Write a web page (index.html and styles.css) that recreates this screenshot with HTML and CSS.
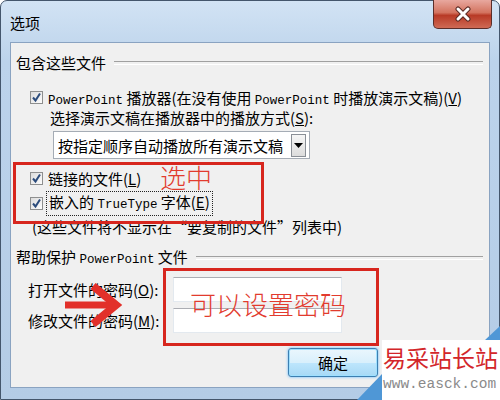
FILE: index.html
```html
<!DOCTYPE html>
<html lang="zh-CN">
<head>
  <meta charset="UTF-8">
  <title>选项</title>
  <link rel="stylesheet" href="styles.css">
</head>
<body>
  <div class="window">
    <div class="titlebar">
      <span class="title">选项</span>
      <button class="close" aria-label="关闭">
        <svg width="20" height="16" viewBox="0 0 20 16">
          <path d="M5 3 L15 13 M15 3 L5 13" stroke="#5a2a24" stroke-width="5" stroke-linecap="round"/>
          <path d="M5 3 L15 13 M15 3 L5 13" stroke="#fff" stroke-width="3" stroke-linecap="round"/>
        </svg>
      </button>
    </div>

    <div class="client">
      <div class="group-head"><span>包含这些文件</span></div>

      <div class="check-row row-player">
        <span class="box"><svg width="11" height="11" viewBox="0 0 11 11"><path d="M2 5.5 L4.5 8.5 L9 1.5" fill="none" stroke="#2c4c7c" stroke-width="2"/></svg></span>
        <span><span class="lat">PowerPoint</span> 播放器(在没有使用 <span class="lat">PowerPoint</span> 时播放演示文稿)(<u>V</u>)</span>
      </div>
      <div class="hint">选择演示文稿在播放器中的播放方式(<u>S</u>):</div>
      <div class="select">
        <span>按指定顺序自动播放所有演示文稿</span>
        <span class="drop"><svg width="9" height="5" viewBox="0 0 9 5"><path d="M0 0 H9 L4.5 5 Z" fill="#000"/></svg></span>
      </div>

      <div class="check-row row-linked">
        <span class="box"><svg width="11" height="11" viewBox="0 0 11 11"><path d="M2 5.5 L4.5 8.5 L9 1.5" fill="none" stroke="#2c4c7c" stroke-width="2"/></svg></span>
        <span>链接的文件(<u>L</u>)</span>
      </div>
      <div class="check-row row-embed">
        <span class="box"><svg width="11" height="11" viewBox="0 0 11 11"><path d="M2 5.5 L4.5 8.5 L9 1.5" fill="none" stroke="#2c4c7c" stroke-width="2"/></svg></span>
        <span class="focus">嵌入的 <span class="lat">TrueType</span> 字体(<u>E</u>)</span>
      </div>
      <div class="note">(这些文件将不显示在“要复制的文件”列表中)</div>

      <div class="group-head head-protect"><span>帮助保护 <span class="lat">PowerPoint</span> 文件</span></div>

      <div class="pw-row">
        <label class="pw-label">打开文件的密码(<u>O</u>):</label>
        <span class="input"></span>
      </div>
      <div class="pw-row pw-second">
        <label class="pw-label">修改文件的密码(<u>M</u>):</label>
        <span class="input"></span>
      </div>

      <button class="ok">确定</button>
    </div>
  </div>

  <!-- 标注 -->
  <div class="mark mark-box mark-files"></div>
  <div class="mark mark-text mark-chosen">选中</div>
  <div class="mark mark-box mark-pw"></div>
  <div class="mark mark-text mark-setpw">可以设置密码</div>
  <svg class="mark arrow" width="64" height="48" viewBox="0 0 64 48">
    <path d="M5 25 H52" stroke="#e2302a" stroke-width="7"/>
    <path d="M33 6 L56 25 L33 44" fill="none" stroke="#e2302a" stroke-width="8"/>
  </svg>

  <div class="mark watermark">
    <svg class="wm-bg" width="145" height="74" viewBox="0 0 145 74">
      <polygon points="27,14 130,14 145,2 145,74 27,74" fill="#fff"/>
      <polygon points="130,14 145,0 145,14" fill="#4f97d6"/>
      <polygon points="2,74 27,48 27,74" fill="#4f97d6"/>
    </svg>
    <div class="wm-name">易采站长站</div>
    <div class="wm-url">www.easck.com</div>
  </div>
</body>
</html>
```

FILE: styles.css
```css
* {
  margin: 0;
  padding: 0;
  box-sizing: border-box;
}

body {
  position: relative;
  width: 500px;
  height: 400px;
  overflow: hidden;
  font-family: "Noto Sans CJK SC", sans-serif;
  font-size: 15px;
  color: #000;
  background: #fff;
}

u {
  text-decoration: underline;
}

.lat {
  font-family: "Liberation Mono", monospace;
  font-size: 12.5px;
}

/* ウィンドウ枠 */
.window {
  width: 500px;
  height: 400px;
  display: flex;
  flex-direction: column;
  padding: 0 9px 11px 9px;
  background: linear-gradient(#d2e3f4, #bcd3eb 60px, #b4cce6);
  border: 1px solid #44566c;
  border-radius: 7px 7px 0 0;
}

.titlebar {
  height: 41px;
  display: flex;
  justify-content: space-between;
  align-items: flex-start;
}

.title {
  padding-top: 12px;
  line-height: 20px;
  font-size: 15px;
}

.close {
  width: 59px;
  height: 29px;
  margin: -1px -2px 0 0;
  display: flex;
  justify-content: center;
  align-items: center;
  border: 1px solid #5b2e2a;
  border-top: none;
  border-radius: 0 0 5px 5px;
  background: linear-gradient(#e8a89f, #d3735f 45%, #b83a26 55%, #cf6a55);
  cursor: pointer;
}

.client {
  flex: 1;
  display: flex;
  flex-direction: column;
  padding-right: 6px;
  background: #f0f0f0;
  border: 1px solid #8aa3c1;
}

.group-head {
  display: flex;
  align-items: center;
  height: 18px;
  margin-top: 11px;
  padding-left: 5px;
  line-height: 18px;
  white-space: nowrap;
}

.group-head::after {
  content: "";
  flex: 1;
  height: 2px;
  margin-left: 8px;
  border-top: 1px solid #a0a0a0;
  border-bottom: 1px solid #fff;
}

.head-protect {
  margin-top: 12px;
}

.check-row {
  display: flex;
  align-items: center;
  gap: 5px;
  height: 20px;
  padding-left: 19px;
  white-space: nowrap;
}

.row-player {
  margin-top: 15px;
}

.row-linked {
  margin-top: 9px;
}

.row-embed {
  margin-top: 5px;
}

.box {
  width: 13px;
  height: 13px;
  display: flex;
  justify-content: center;
  align-items: center;
  border: 1px solid #8e8f8f;
  background: linear-gradient(135deg, #dcdcdc, #fdfdfd);
}

.focus {
  padding: 0 2px;
  margin-left: -2px;
  border: 1px dotted #222;
  line-height: 19px;
}

.hint {
  height: 20px;
  margin-top: 1px;
  padding-left: 39px;
  line-height: 20px;
}

.select {
  width: 257px;
  height: 28px;
  margin: 3px 0 0 42px;
  display: flex;
  justify-content: space-between;
  align-items: center;
  padding: 0 3px 0 4px;
  background: #fff;
  border: 1px solid #a5acb5;
}

.drop {
  width: 15px;
  height: 23px;
  display: flex;
  justify-content: center;
  align-items: center;
  border: 1px solid #8a8f96;
  background: linear-gradient(#f6f6f6, #dcdcdc);
}

.note {
  height: 20px;
  margin-top: 4px;
  padding-left: 21px;
  line-height: 20px;
}

.pw-row {
  display: flex;
  align-items: center;
  height: 25px;
  margin-top: 10px;
  padding-left: 17px;
}

.pw-second {
  margin-top: 6px;
}

.pw-label {
  width: 145px;
  white-space: nowrap;
}

.input {
  width: 169px;
  height: 25px;
  background: #fff;
  border: 1px solid #e3e9ef;
  border-top-color: #abadb3;
}

.ok {
  width: 90px;
  height: 29px;
  margin: 15px 0 0 277px;
  font-family: inherit;
  font-size: 15px;
  border: 1px solid #3c7fb1;
  border-radius: 3px;
  background: linear-gradient(#eaf6fd, #d9f0fc 50%, #bee6fd 51%, #a7d9f5);
  box-shadow: inset 0 0 0 1px #9fe0ff, 0 0 3px #5fb7ff;
}

/* 赤い注釈 */
.mark {
  position: absolute;
}

.mark-box {
  border: 3px solid #d7261e;
}

.mark-files {
  left: 13px;
  top: 162px;
  width: 251px;
  height: 62px;
}

.mark-pw {
  left: 163px;
  top: 268px;
  width: 216px;
  height: 78px;
}

.mark-text {
  color: #e23b2e;
  font-size: 26px;
  font-weight: 300;
  line-height: 26px;
  white-space: nowrap;
}

.mark-chosen {
  left: 160px;
  top: 164px;
}

.mark-setpw {
  left: 190px;
  top: 291px;
}

.arrow {
  left: 60px;
  top: 280px;
}

.watermark {
  left: 355px;
  top: 326px;
  width: 145px;
  height: 74px;
}

.wm-bg {
  position: absolute;
  left: 0;
  top: 0;
}

.wm-name {
  position: relative;
  margin: 16px 0 0 28px;
  color: #d3262a;
  font-size: 23px;
  line-height: 30px;
  white-space: nowrap;
}

.wm-url {
  position: relative;
  margin: 4px 0 0 28px;
  color: #8a8a8a;
  font-family: "Liberation Mono", monospace;
  font-size: 14.5px;
  line-height: 16px;
  white-space: nowrap;
}
```
